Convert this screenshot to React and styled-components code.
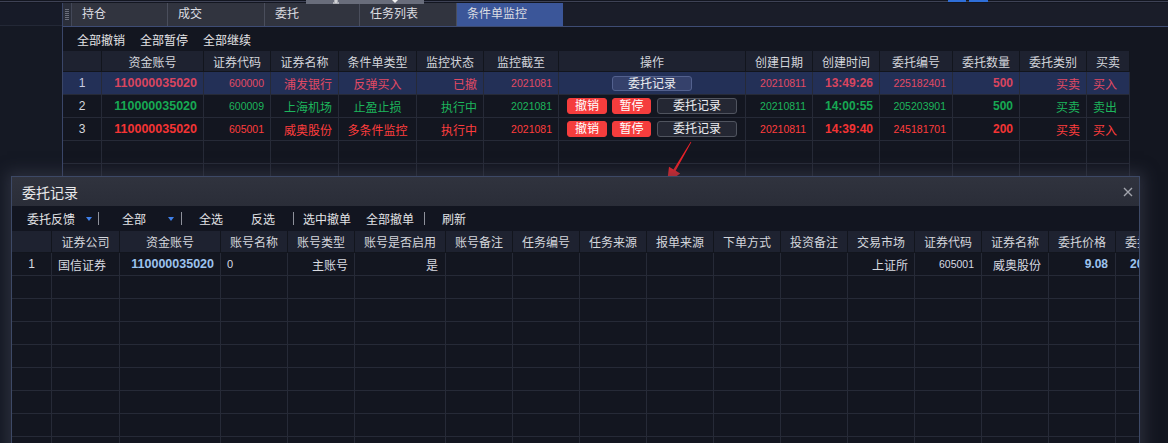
import React from 'react';
import styled, { createGlobalStyle } from 'styled-components';

const GlobalStyle = createGlobalStyle`
  html, body { margin: 0; padding: 0; height: 100%; overflow: hidden; background: #131620; }
  body { font-family: "Liberation Sans", "Noto Sans CJK SC", sans-serif; font-size: 12px; color: #dcdde2; }
  #root { height: 100%; }
  * { box-sizing: border-box; }
`;

const MAIN_COLS = '39px 102px 67px 68px 78px 67px 75px 187px 67px 67px 73px 67px 67px 43px';
const DLG_COLS = '40px 68px 101px 67px 67px 91px 67px 67px 67px 67px 67px 67px 67px 67px 67px 67px 67px';

const TONES = {
  pink: { text: '#e24a64', strong: '#d9455f', idx: '#c8cce0' },
  green: { text: '#1db55c', strong: '#17a953', idx: '#d6d8de' },
  red: { text: '#ff3d3d', strong: '#f43434', idx: '#d6d8de' },
};

const Page = styled.div`
  position: relative;
  width: 1168px;
  height: 443px;
  overflow: hidden;
  display: flex;
  flex-direction: column;
  background: #131620;
`;

const TopStrip = styled.div`
  height: 3px;
  flex: none;
  background: linear-gradient(to bottom, #131620 0 1px, #3e4255 1px 2px, #131620 2px 3px);
`;

const TopDeco = styled.div`
  position: absolute;
  left: 306px;
  top: 0;
  width: 118px;
  height: 4px;
  background: #696d7b;
  display: flex;
  align-items: flex-start;
`;

const TopMark = styled.span`
  position: absolute;
  top: 0;
  left: ${p => p.$x}px;
  width: ${p => p.$w}px;
  height: 2px;
  background: #2f6fd8;
`;

const Body = styled.div`
  flex: 1;
  display: flex;
  min-height: 0;
`;

const LeftRail = styled.div`
  width: 63px;
  flex: none;
  border-right: 1px solid #3a4668;
  background: #151924;
  display: flex;
  flex-direction: column;
`;

const RailTop = styled.div`
  height: 23px;
  background: #171b28;
  border-bottom: 1px solid #232836;
`;

const Main = styled.div`
  flex: 1;
  display: flex;
  flex-direction: column;
  min-width: 0;
`;

const TabBar = styled.div`
  height: 24px;
  flex: none;
  display: flex;
  background: #1a1d29;
  border-bottom: 1px solid #3e4c74;
`;

const Grip = styled.div`
  width: 9px;
  flex: none;
  background: #2a2e3a;
  border-right: 1px solid #434858;
  position: relative;
  &::after {
    content: '';
    position: absolute;
    left: 2px;
    right: 2px;
    top: 6px;
    bottom: 5px;
    background: repeating-linear-gradient(to bottom, #6b6f7c 0 1px, transparent 1px 2px);
  }
`;

const Tab = styled.div`
  width: ${p => p.$w}px;
  flex: none;
  padding-left: 10px;
  line-height: 23px;
  font-size: 12px;
  color: #dcdde2;
  background: ${p => (p.$active ? '#3b5699' : '#31343f')};
  border-right: 1px solid ${p => (p.$active ? '#3b5699' : '#4a4e5c')};
`;

const Toolbar = styled.div`
  height: 24px;
  flex: none;
  display: flex;
  align-items: center;
  gap: 15px;
  padding-left: 14px;
  font-size: 12px;
  color: #e4e4e6;
`;

const ToolText = styled.span`
  white-space: nowrap;
`;

const Table = styled.div`
  display: flex;
  flex-direction: column;
  align-self: flex-start;
  width: max-content;
`;

const Row = styled.div`
  display: grid;
  grid-template-columns: ${p => p.$cols};
  height: ${p => p.$h}px;
  background: ${p => p.$bg || 'transparent'};
`;

const Cell = styled.div`
  display: flex;
  align-items: center;
  justify-content: ${p => (p.$align === 'left' ? 'flex-start' : p.$align === 'center' ? 'center' : 'flex-end')};
  padding: 0 ${p => p.$pad ?? 6}px;
  border-right: 1px solid ${p => p.$line || '#262a37'};
  border-bottom: 1px solid ${p => p.$line || '#262a37'};
  color: ${p => p.$color || '#d8dae0'};
  font-size: ${p => p.$size || 12}px;
  font-weight: ${p => (p.$bold ? 700 : 400)};
  white-space: nowrap;
  overflow: hidden;
  min-width: 0;
`;

const HeadCell = styled(Cell).attrs({ $align: 'center', $line: '#12151d' })`
  color: #d4d6dc;
`;

const OpsCell = styled(Cell).attrs({ $align: 'center' })`
  gap: 0;
`;

const OpButton = styled.button`
  width: ${p => p.$w}px;
  height: ${p => (p.$variant === 'selected' ? 15 : 16)}px;
  margin-left: ${p => p.$ml || 0}px;
  padding: 0;
  border-radius: 3px;
  font-family: inherit;
  font-size: 12px;
  line-height: 14px;
  cursor: pointer;
  color: ${p => (p.$variant === 'danger' ? '#ffffff' : '#eeeff2')};
  background: ${p => (p.$variant === 'danger' ? '#f53d3d' : p.$variant === 'selected' ? '#35416b' : '#242733')};
  border: 1px solid ${p => (p.$variant === 'danger' ? '#f53d3d' : p.$variant === 'selected' ? '#53618e' : '#50545f')};
`;

const Dialog = styled.div`
  position: absolute;
  left: 11px;
  top: 176px;
  width: 1129px;
  height: 290px;
  border: 1px solid #3d4966;
  background: #131620;
  box-shadow: 0 0 14px 4px rgba(62, 66, 82, 0.55);
  display: flex;
  flex-direction: column;
  overflow: hidden;
`;

const DialogTitle = styled.div`
  height: 29px;
  flex: none;
  display: flex;
  align-items: center;
  justify-content: space-between;
  padding: 0 6px 0 10px;
  background: linear-gradient(to bottom, #30333e, #2a2d38);
  font-size: 14px;
  color: #e8e8ea;
`;

const CloseIcon = styled.svg`
  width: 10px;
  height: 10px;
  margin-top: 1px;
`;

const DialogToolbar = styled.div`
  height: 25px;
  flex: none;
  display: flex;
  align-items: center;
  padding-left: 15px;
  background: #121520;
  font-size: 12px;
  color: #e2e3e6;
`;

const ToolItem = styled.span`
  display: inline-flex;
  align-items: center;
  margin-left: ${p => p.$ml || 0}px;
  white-space: nowrap;
`;

const Caret = styled.span`
  display: inline-block;
  margin-left: ${p => p.$ml}px;
  width: 0;
  height: 0;
  border-left: 3.5px solid transparent;
  border-right: 3.5px solid transparent;
  border-top: 4px solid #3f80ea;
`;

const Sep = styled.span`
  display: inline-block;
  width: 1px;
  height: 13px;
  margin-left: ${p => p.$ml || 0}px;
  background: #8e919b;
`;

const Arrow = styled.svg`
  position: absolute;
  left: 655px;
  top: 136px;
  width: 40px;
  height: 50px;
`;

const mainHeaders = ['', '资金账号', '证券代码', '证券名称', '条件单类型', '监控状态', '监控截至', '操作', '创建日期', '创建时间', '委托编号', '委托数量', '委托类别', '买卖'];

const mainRows = [
  { tone: 'pink', selected: true, idx: 1, acct: '110000035020', code: '600000', name: '浦发银行', type: '反弹买入', status: '已撤', until: '2021081', date: '20210811', time: '13:49:26', no: '225182401', qty: '500', cat: '买卖', side: '买入' },
  { tone: 'green', idx: 2, acct: '110000035020', code: '600009', name: '上海机场', type: '止盈止损', status: '执行中', until: '2021081', date: '20210811', time: '14:00:55', no: '205203901', qty: '500', cat: '买卖', side: '卖出' },
  { tone: 'red', idx: 3, acct: '110000035020', code: '605001', name: '威奥股份', type: '多条件监控', status: '执行中', until: '2021081', date: '20210811', time: '14:39:40', no: '245181701', qty: '200', cat: '买卖', side: '买入' },
];

const dlgHeaders = ['', '证券公司', '资金账号', '账号名称', '账号类型', '账号是否启用', '账号备注', '任务编号', '任务来源', '报单来源', '下单方式', '投资备注', '交易市场', '证券代码', '证券名称', '委托价格', '委托数量'];

const BLUE = '#9cc3ee';

function MainRow({ r }) {
  const t = TONES[r.tone];
  return (
    <Row $cols={MAIN_COLS} $h={23} $bg={r.selected ? '#233057' : undefined}>
      <Cell $align="center" $color={t.idx}>{r.idx}</Cell>
      <Cell $color={t.strong} $bold $size={12.5}>{r.acct}</Cell>
      <Cell $color={t.text} $size={10.5}>{r.code}</Cell>
      <Cell $color={t.text}>{r.name}</Cell>
      <Cell $align="center" $color={t.text}>{r.type}</Cell>
      <Cell $color={t.text}>{r.status}</Cell>
      <Cell $color={t.text} $size={10.5}>{r.until}</Cell>
      <OpsCell>
        {r.selected ? (
          <OpButton $w={80} $variant="selected">委托记录</OpButton>
        ) : (
          <>
            <OpButton $w={40} $variant="danger">撤销</OpButton>
            <OpButton $w={39} $ml={5} $variant="danger">暂停</OpButton>
            <OpButton $w={80} $ml={6}>委托记录</OpButton>
          </>
        )}
      </OpsCell>
      <Cell $color={t.text} $size={10.5}>{r.date}</Cell>
      <Cell $color={t.strong} $bold>{r.time}</Cell>
      <Cell $color={t.text} $size={10.5}>{r.no}</Cell>
      <Cell $color={t.strong} $bold>{r.qty}</Cell>
      <Cell $color={t.text}>{r.cat}</Cell>
      <Cell $align="left" $color={t.text}>{r.side}</Cell>
    </Row>
  );
}

function EmptyRow({ cols, n }) {
  return (
    <Row $cols={cols} $h={23}>
      {Array.from({ length: n }).map((_, i) => <Cell key={i} />)}
    </Row>
  );
}

export default function App() {
  return (
    <>
      <GlobalStyle />
      <Page>
        <TopStrip />
        <Body>
          <LeftRail>
            <RailTop />
          </LeftRail>
          <Main>
            <TabBar>
              <Grip />
              <Tab $w={96}>持仓</Tab>
              <Tab $w={97}>成交</Tab>
              <Tab $w={95}>委托</Tab>
              <Tab $w={97}>任务列表</Tab>
              <Tab $w={106} $active>条件单监控</Tab>
            </TabBar>
            <Toolbar>
              <ToolText>全部撤销</ToolText>
              <ToolText>全部暂停</ToolText>
              <ToolText>全部继续</ToolText>
            </Toolbar>
            <Table>
              <Row $cols={MAIN_COLS} $h={21} $bg="#1e2230">
                {mainHeaders.map((h, i) => <HeadCell key={i}>{h}</HeadCell>)}
              </Row>
              {mainRows.map(r => <MainRow key={r.idx} r={r} />)}
              <EmptyRow cols={MAIN_COLS} n={14} />
              <EmptyRow cols={MAIN_COLS} n={14} />
              <EmptyRow cols={MAIN_COLS} n={14} />
            </Table>
          </Main>
        </Body>

        <TopDeco>
          <svg width="118" height="4" viewBox="0 0 118 4">
            <path d="M27 3h6M30 0v3M28 1h4" stroke="#f2f2f2" strokeWidth="1" />
            <path d="M86 0h6l-3 3z" fill="#f2f2f2" />
          </svg>
        </TopDeco>
        <TopMark $x={948} $w={18} />
        <TopMark $x={969} $w={19} />

        <Arrow viewBox="0 0 40 50">
          <polygon points="35.7,5.8 18.5,33.4 14,30.8 12,47 25.2,37.4 20.7,34.8 36.3,6.2" fill="#ea2229" />
        </Arrow>

        <Dialog>
          <DialogTitle>
            <span>委托记录</span>
            <CloseIcon viewBox="0 0 10 10">
              <path d="M1 1L9 9M9 1L1 9" stroke="#a2a4ac" strokeWidth="1.4" />
            </CloseIcon>
          </DialogTitle>
          <DialogToolbar>
            <ToolItem>委托反馈<Caret $ml={11} /></ToolItem>
            <Sep $ml={6} />
            <ToolItem $ml={23}>全部<Caret $ml={22} /></ToolItem>
            <Sep $ml={7} />
            <ToolItem $ml={17}>全选</ToolItem>
            <ToolItem $ml={28}>反选</ToolItem>
            <Sep $ml={18} />
            <ToolItem $ml={9}>选中撤单</ToolItem>
            <ToolItem $ml={15}>全部撤单</ToolItem>
            <Sep $ml={10} />
            <ToolItem $ml={17}>刷新</ToolItem>
          </DialogToolbar>
          <Table>
            <Row $cols={DLG_COLS} $h={22} $bg="#1e2230">
              {dlgHeaders.map((h, i) => <HeadCell key={i}>{h}</HeadCell>)}
            </Row>
            <Row $cols={DLG_COLS} $h={23}>
              <Cell $align="center">1</Cell>
              <Cell $align="left">国信证券</Cell>
              <Cell $bold $size={12.5} $color={BLUE}>110000035020</Cell>
              <Cell $align="left" $size={11}>0</Cell>
              <Cell>主账号</Cell>
              <Cell $pad={7}>是</Cell>
              <Cell />
              <Cell />
              <Cell />
              <Cell />
              <Cell />
              <Cell />
              <Cell>上证所</Cell>
              <Cell $size={10.5} $pad={7}>605001</Cell>
              <Cell $pad={7}>威奥股份</Cell>
              <Cell $bold $color={BLUE} $pad={7}>9.08</Cell>
              <Cell $bold $color={BLUE} $align="left" $pad={14}>200</Cell>
            </Row>
            {Array.from({ length: 8 }).map((_, i) => <EmptyRow key={i} cols={DLG_COLS} n={17} />)}
          </Table>
        </Dialog>
      </Page>
    </>
  );
}
